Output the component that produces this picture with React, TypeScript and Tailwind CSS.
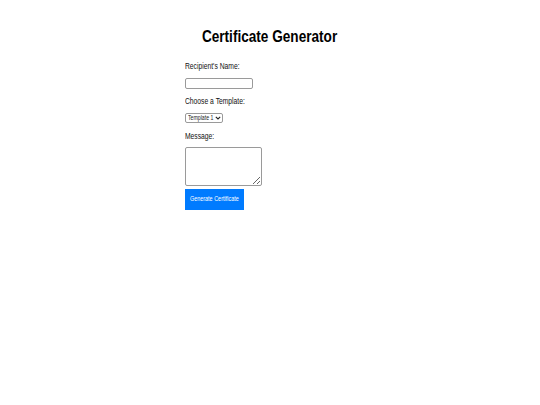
const narrow = 'inline-block origin-left whitespace-nowrap'

export default function App() {
  return (
    <div className="min-h-[405px] bg-white font-['Liberation_Sans',Arial,sans-serif] text-black">
      <h1 className="pt-[28px] text-center text-[17px] leading-[17px] font-bold">
        <span className="inline-block origin-center scale-x-[0.8] whitespace-nowrap">Certificate Generator</span>
      </h1>

      <form className="mx-auto mt-[16px] w-[170px]" onSubmit={(e) => e.preventDefault()}>
        <label htmlFor="name" className="block text-[9.5px] leading-[9px] text-[#111]">
          <span className={`${narrow} scale-x-[0.71]`}>Recipient's Name:</span>
        </label>
        <input
          id="name"
          type="text"
          className="mt-[8px] block h-[11px] w-[68px] rounded-[2px] border border-[#9a9a9a] bg-white"
        />

        <label htmlFor="template" className="mt-[7px] block text-[9.5px] leading-[9px] text-[#111]">
          <span className={`${narrow} scale-x-[0.71]`}>Choose a Template:</span>
        </label>
        <div className="relative mt-[8px] flex h-[10px] w-[38px] items-center rounded-[2px] border border-[#9a9a9a] bg-white pl-[2px] text-[6.5px] leading-[6.5px] text-[#222]">
          <span className={`${narrow} w-[26px] scale-x-[0.8]`}>Template 1</span>
          <svg width="6" height="4" viewBox="0 0 6 4" className="ml-[1px]" fill="none">
            <path d="M0.8 0.8 L3 3 L5.2 0.8" stroke="#222" strokeWidth="1.1" />
          </svg>
          <select id="template" className="absolute inset-0 cursor-pointer opacity-0">
            <option>Template 1</option>
            <option>Template 2</option>
            <option>Template 3</option>
          </select>
        </div>

        <label htmlFor="message" className="mt-[8px] block text-[9.5px] leading-[9px] text-[#111]">
          <span className={`${narrow} scale-x-[0.71]`}>Message:</span>
        </label>
        <textarea
          id="message"
          className="mt-[7px] block h-[39px] w-[77px] rounded-[2px] border border-[#9a9a9a] bg-white"
        />

        <button
          type="submit"
          className="mt-[3px] flex h-[21px] w-[59px] items-center justify-center bg-[#007bff] text-[7px] text-white"
        >
          <span className="inline-block origin-center scale-x-[0.78] whitespace-nowrap">Generate Certificate</span>
        </button>
      </form>
    </div>
  )
}
